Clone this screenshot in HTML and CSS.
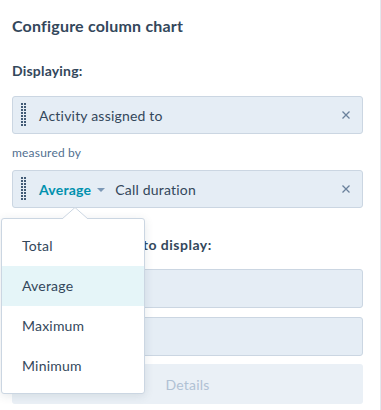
FILE: index.html
```html
<!DOCTYPE html>
<html lang="en">
<head>
<meta charset="UTF-8">
<meta name="viewport" content="width=device-width, initial-scale=1.0">
<title>Configure column chart</title>
<link rel="stylesheet" href="styles.css">
</head>
<body>
<div class="panel">
    <h2 class="title">Configure column chart</h2>

    <div class="label">Displaying:</div>
    <div class="field">
        <svg class="grip" width="6" height="24" viewBox="0 0 6 24"><defs><pattern id="dots" width="3" height="3" patternUnits="userSpaceOnUse"><rect width="2" height="2" /></pattern></defs><rect width="6" height="24" fill="url(#dots)" /></svg>
        <span class="field-text">Activity assigned to</span>
        <svg class="remove" width="10" height="10" viewBox="0 0 10 10"><path d="M1.5 1.5L8.5 8.5M8.5 1.5L1.5 8.5"/></svg>
    </div>

    <div class="sub-label">measured by</div>
    <div class="measure">
        <div class="field">
            <svg class="grip" width="6" height="24" viewBox="0 0 6 24"><rect width="6" height="24" fill="url(#dots)" /></svg>
            <span class="agg">Average</span>
            <span class="caret"></span>
            <span class="field-text">Call duration</span>
            <svg class="remove" width="10" height="10" viewBox="0 0 10 10"><path d="M1.5 1.5L8.5 8.5M8.5 1.5L1.5 8.5"/></svg>
        </div>
        <div class="popover">
            <svg class="pointer" width="26" height="12" viewBox="0 0 26 12"><path d="M0 12L13 0.5L26 12" /></svg>
            <ul class="menu">
                <li>Total</li>
                <li class="active">Average</li>
                <li>Maximum</li>
                <li>Minimum</li>
            </ul>
        </div>
    </div>

    <div class="label label-2"><span class="lead">Choose properties</span> to display:</div>
    <div class="field empty"></div>
    <div class="field empty"></div>
    <button class="details">Details</button>
</div>
</body>
</html>
```

FILE: styles.css
```css
body {
    margin: 0;
    font-family: Lato, "Open Sans", sans-serif;
    color: #33475b;
    background: #fff;
}
.panel {
    box-sizing: border-box;
    width: 381px;
    height: 410px;
    padding: 16px 17px 0 12px;
    border-right: 1px solid #e3e8ee;
    overflow: hidden;
}
.title {
    margin: 0;
    font-size: 16px;
    line-height: 20px;
    font-weight: 700;
    letter-spacing: 0.2px;
}
.label {
    margin-top: 25px;
    font-size: 14px;
    line-height: 20px;
    font-weight: 700;
    letter-spacing: 0.2px;
}
.label-2 {
    margin-top: 27px;
    letter-spacing: 0.5px;
}
.label-2 .lead {
    margin-right: 4px;
}
.sub-label {
    margin-top: 11px;
    font-size: 12px;
    line-height: 16px;
    color: #516f90;
    letter-spacing: 0.2px;
}
.field {
    box-sizing: border-box;
    display: flex;
    align-items: center;
    height: 38px;
    margin-top: 15px;
    padding: 0 11px 0 8px;
    background: #e5edf5;
    border: 1px solid #cbd6e2;
    border-radius: 3px;
    font-size: 14px;
    letter-spacing: 0.2px;
}
.sub-label + .measure .field {
    margin-top: 9px;
}
.grip {
    flex: none;
    margin-right: 12px;
    fill: #425b76;
}
.field-text {
    flex: 1;
}
.agg {
    font-weight: 700;
    color: #0091ae;
}
.caret {
    width: 0;
    height: 0;
    margin: 2px 10px 0 6px;
    border-left: 4px solid transparent;
    border-right: 4px solid transparent;
    border-top: 4px solid #7c98b6;
}
.remove path {
    stroke: #6a819c;
    stroke-width: 1.3;
    fill: none;
}
.measure {
    position: relative;
}
.popover {
    position: absolute;
    left: -11px;
    top: 48px;
    width: 144px;
    box-sizing: border-box;
    background: #fff;
    border: 1px solid #cbd6e2;
    border-radius: 3px;
    box-shadow: 0 2px 10px rgba(45, 62, 80, 0.12);
    z-index: 2;
}
.pointer {
    position: absolute;
    left: 60px;
    top: -12px;
}
.pointer path {
    fill: #fff;
    stroke: #cbd6e2;
    stroke-width: 1;
}
.menu {
    margin: 0;
    padding: 7px 0;
    list-style: none;
}
.menu li {
    height: 40px;
    line-height: 40px;
    padding-left: 20px;
    font-size: 14px;
    letter-spacing: 0.2px;
}
.menu .active {
    background: #e5f5f8;
}
.empty {
    height: 39px;
    margin-top: 9px;
}
.label-2 + .empty {
    margin-top: 14px;
}
.details {
    display: block;
    width: 100%;
    height: 40px;
    margin-top: 8px;
    border: 0;
    border-radius: 3px;
    background: #eaf0f6;
    color: #b0c1d4;
    font-family: inherit;
    font-size: 14px;
    letter-spacing: 0.2px;
}
```
